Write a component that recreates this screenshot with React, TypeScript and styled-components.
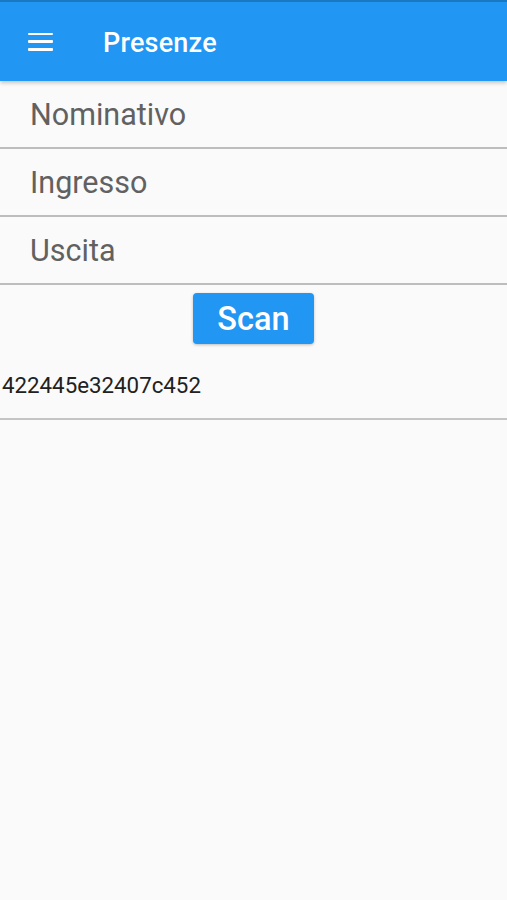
import React from 'react';
import styled, { createGlobalStyle } from 'styled-components';

const GlobalStyle = createGlobalStyle`
  html, body {
    margin: 0;
    padding: 0;
    background: #fafafa;
    font-family: Roboto, 'Liberation Sans', sans-serif;
  }
`;

const Page = styled.div`
  width: 507px;
  height: 900px;
  background: #fafafa;
  display: flex;
  flex-direction: column;
`;

const AppBar = styled.header`
  height: 79px;
  background: #2196f3;
  border-top: 2px solid #1a78c2;
  display: flex;
  align-items: center;
  padding-left: 28px;
  box-shadow: 0 2px 4px rgba(0, 0, 0, 0.22);
  position: relative;
  z-index: 1;
`;

const MenuButton = styled.div`
  width: 25px;
  height: 18px;
  display: flex;
  flex-direction: column;
  justify-content: space-between;

  span {
    display: block;
    height: 2.5px;
    background: #ffffff;
    border-radius: 1px;
  }
`;

const Title = styled.h1`
  margin: 3px 0 0 50px;
  color: #ffffff;
  font-size: 27px;
  font-weight: 500;
  letter-spacing: 0.2px;
`;

const Field = styled.div`
  height: 66px;
  border-bottom: 2px solid #bdbdbd;
  display: flex;
  align-items: center;
  padding-left: 30px;
  font-size: 30.5px;
  color: #616161;
`;

const ScanRow = styled.div`
  display: flex;
  justify-content: center;
  padding-top: 8px;
`;

const ScanButton = styled.button`
  width: 121px;
  height: 51px;
  border: none;
  border-radius: 4px;
  background: #2196f3;
  color: #ffffff;
  font-family: Roboto, 'Liberation Sans', sans-serif;
  font-size: 32.5px;
  font-weight: 500;
  box-shadow: 0 1px 3px rgba(0, 0, 0, 0.25);
  padding: 0;
`;

const Code = styled.div`
  height: 76px;
  border-bottom: 2px solid #c4c4c4;
  display: flex;
  align-items: center;
  padding-left: 2px;
  font-size: 22.3px;
  color: #212121;
  padding-top: 8px;
  box-sizing: border-box;
`;

const fields = ['Nominativo', 'Ingresso', 'Uscita'];

export default function App() {
  return (
    <Page>
      <GlobalStyle />
      <AppBar>
        <MenuButton>
          <span />
          <span />
          <span />
        </MenuButton>
        <Title>Presenze</Title>
      </AppBar>
      {fields.map((f) => (
        <Field key={f}>{f}</Field>
      ))}
      <ScanRow>
        <ScanButton>Scan</ScanButton>
      </ScanRow>
      <Code>422445e32407c452</Code>
    </Page>
  );
}
